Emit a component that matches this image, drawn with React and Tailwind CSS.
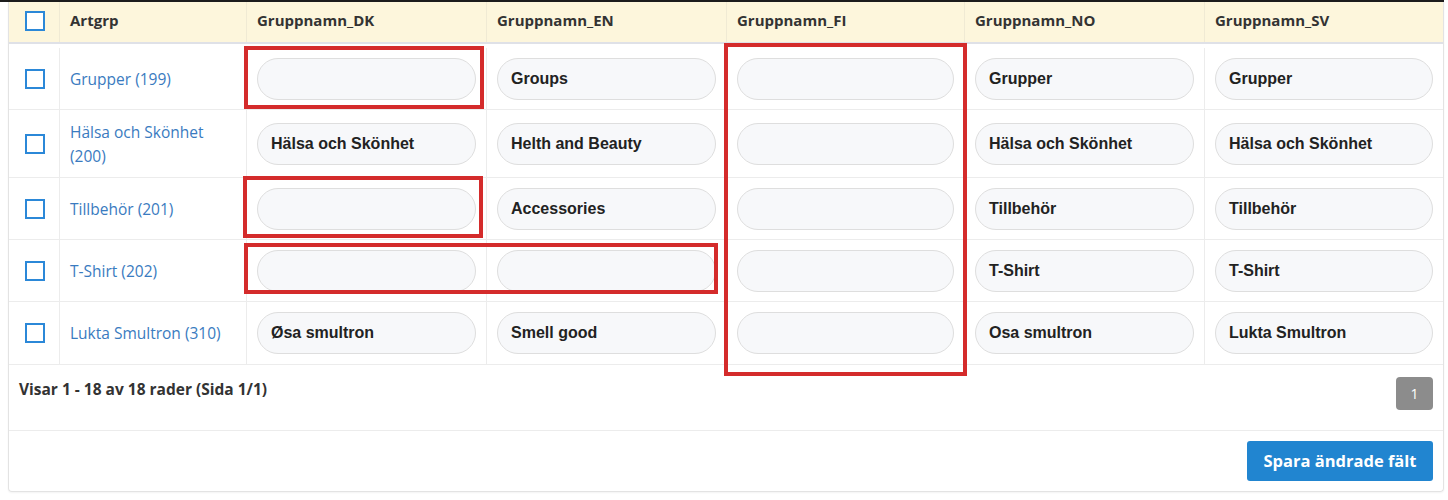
import React from "react";

const rows = [
  { name: "Grupper (199)", h: "h-[66px] pt-[4px]", vals: ["", "Groups", "", "Grupper", "Grupper"] },
  { name: "Hälsa och Skönhet (200)", h: "h-[68px]", vals: ["Hälsa och Skönhet", "Helth and Beauty", "", "Hälsa och Skönhet", "Hälsa och Skönhet"] },
  { name: "Tillbehör (201)", h: "h-[62px]", vals: ["", "Accessories", "", "Tillbehör", "Tillbehör"] },
  { name: "T-Shirt (202)", h: "h-[62px]", vals: ["", "", "", "T-Shirt", "T-Shirt"] },
  { name: "Lukta Smultron (310)", h: "h-[63px]", vals: ["Øsa smultron", "Smell good", "", "Osa smultron", "Lukta Smultron"] },
];

const headers = ["Gruppnamn_DK", "Gruppnamn_EN", "Gruppnamn_FI", "Gruppnamn_NO", "Gruppnamn_SV"];
const cols = "grid grid-cols-[50px_187px_240px_240px_238px_240px_1fr]";

function Box() {
  return <div className="w-[20px] h-[20px] border-2 border-[#2b88d8] bg-white" />;
}

const open = { fontFamily: '"Open Sans", sans-serif' };
const arial = { fontFamily: '"Liberation Sans", Arial, sans-serif' };

export default function App() {
  return (
    <div className="relative w-[1448px] h-[500px] bg-white overflow-hidden" style={open}>
      <div className="w-[1444px] h-[2px] bg-[#1c1c1c]" />
      <div className="ml-[8px] w-[1436px] border-l border-r border-b border-[#e3e3e3] rounded-b-[4px] shadow-[0_1px_2px_rgba(0,0,0,0.05)]">
        {/* header */}
        <div className={`${cols} h-[40px] bg-[#fdf6dc] text-[15px] font-bold text-[#333]`}>
          <div className="flex items-center justify-center pl-[1px] pb-[2px]"><Box /></div>
          <div className="flex items-center pl-[10px] pb-[3px] border-l border-[#f0ead4]">Artgrp</div>
          {headers.map((h) => (
            <div key={h} className="flex items-center pl-[10px] pb-[3px] border-l border-[#f0ead4]">{h}</div>
          ))}
        </div>
        <div className="h-[2px] bg-[#dfe1e7]" />
        {rows.map((r) => (
          <div key={r.name} className={`${cols} ${r.h} border-b border-[#ececec]`}>
            <div className="flex items-center justify-center pl-[1px]"><Box /></div>
            <div className="flex items-center px-[10px] border-l border-[#ececec] text-[15.5px] leading-[24px] text-[#3a7bc0]">{r.name}</div>
            {r.vals.map((v, i) => (
              <div key={i} className="flex items-center px-[10px] border-l border-[#ececec]">
                <div className="w-full h-[42px] rounded-full border border-[#dedede] bg-[#f7f8fa] flex items-center pl-[13px] text-[16px] font-bold text-[#222]" style={arial}>
                  {v}
                </div>
              </div>
            ))}
          </div>
        ))}
        {/* footer */}
        <div className="h-[66px] border-b border-[#ececec] flex justify-between items-start pl-[10px] pr-[10px] pt-[12px]">
          <div className="text-[15.5px] font-bold text-[#333] leading-[20px] mt-[2px]">Visar 1 - 18 av 18 rader (Sida 1/1)</div>
          <div className="w-[37px] h-[33px] rounded-[4px] bg-[#8c8c8c] text-white text-[14px] flex items-center justify-center">1</div>
        </div>
        <div className="h-[60px] flex justify-end items-start pt-[10px] pr-[10px]">
          <button className="h-[40px] w-[186px] rounded-[3px] bg-[#2185d0] text-white text-[16.5px] font-bold">Spara ändrade fält</button>
        </div>
      </div>

      {/* annotation boxes */}
      <div className="absolute left-[244px] top-[46px] w-[240px] h-[63px] border-4 border-[#d42b2b]" />
      <div className="absolute left-[724px] top-[43px] w-[243px] h-[333px] border-4 border-[#d42b2b]" />
      <div className="absolute left-[243px] top-[176px] w-[240px] h-[62px] border-4 border-[#d42b2b]" />
      <div className="absolute left-[244px] top-[243px] w-[474px] h-[51px] border-4 border-[#d42b2b]" />
    </div>
  );
}
